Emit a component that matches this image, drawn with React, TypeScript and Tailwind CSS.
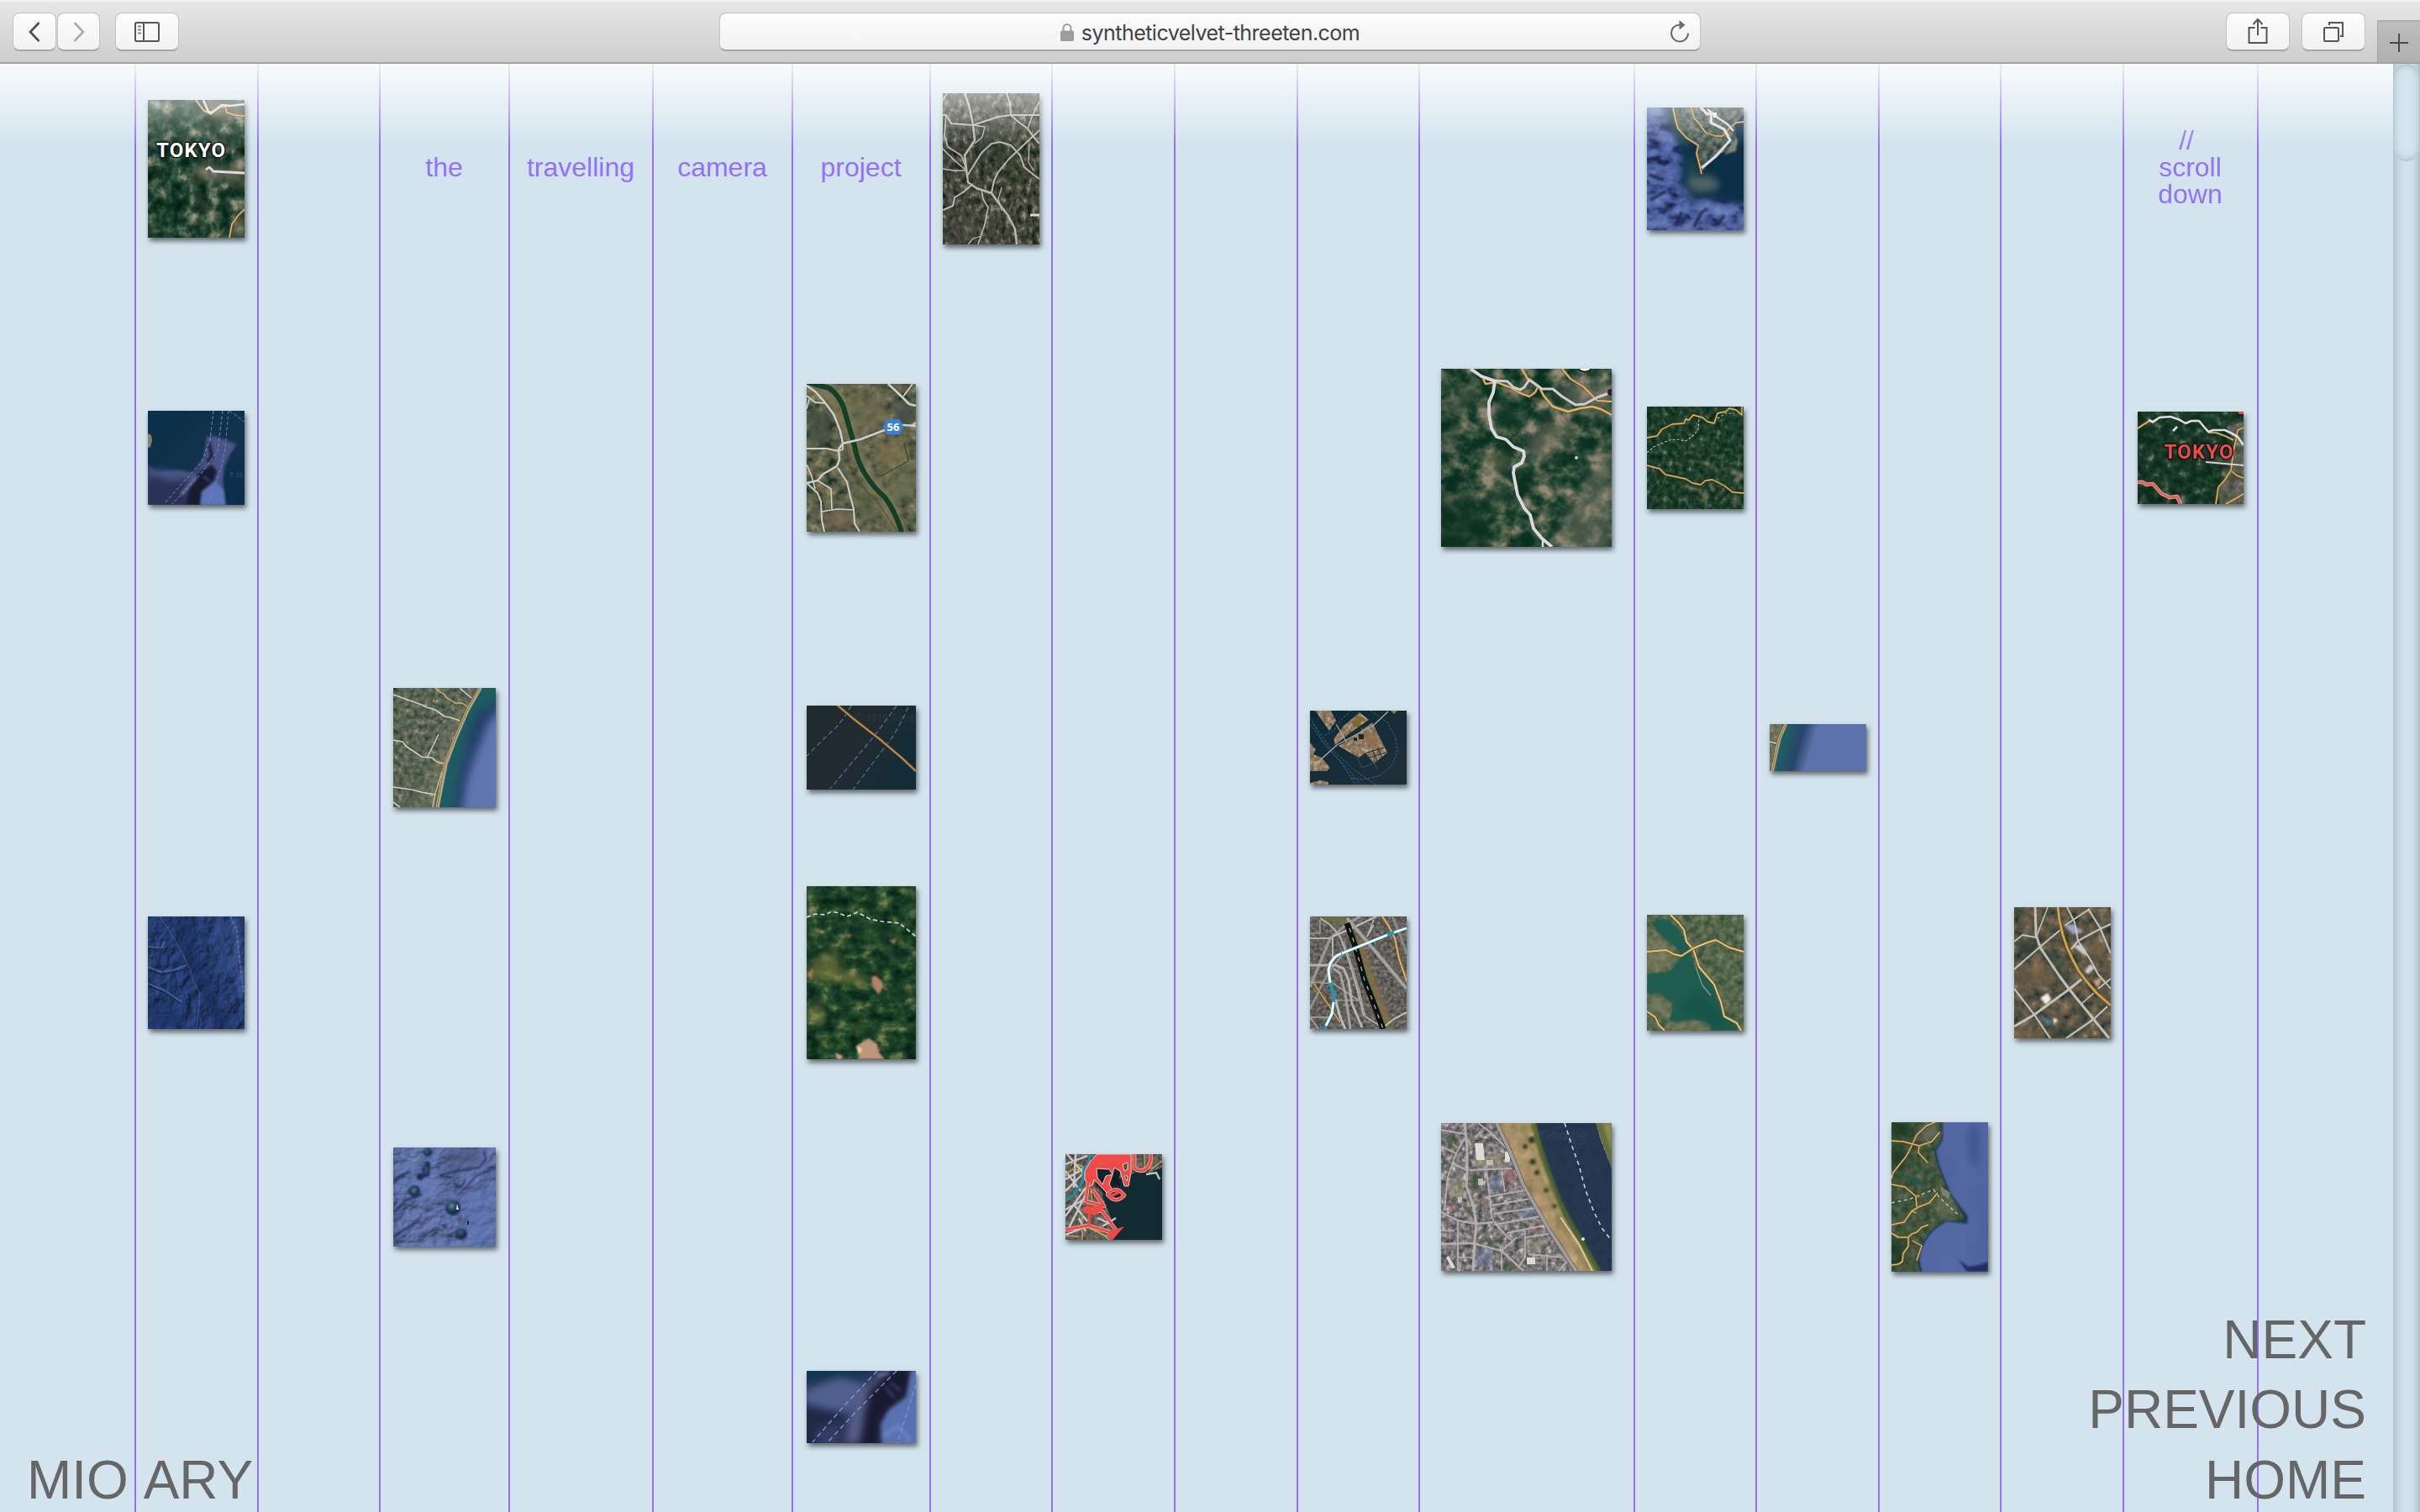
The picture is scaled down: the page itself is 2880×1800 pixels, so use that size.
import React from "react";

/* ---------- terrain drawing helpers ---------- */

function channel(colors: string[], offset: number) {
  return colors.map((c) => (parseInt(c.slice(offset, offset + 2), 16) / 255).toFixed(3)).join(" ");
}

type TexProps = { id: string; freq: string; seed?: number; oct?: number; gain?: number; colors: string[] };

/** Fractal noise mapped onto a colour ramp. */
function Tex({ id, freq, seed = 1, oct = 5, gain = 1.6, colors }: TexProps) {
  const off = 0.5 - gain / 2;
  const row = `${gain} 0 0 0 ${off}`;
  return (
    <filter id={id} x="0" y="0" width="100%" height="100%" colorInterpolationFilters="sRGB">
      <feTurbulence type="fractalNoise" baseFrequency={freq} numOctaves={oct} seed={seed} />
      <feColorMatrix type="matrix" values={`${row} ${row} ${row} 0 0 0 0 1`} />
      <feComponentTransfer>
        <feFuncR type="table" tableValues={channel(colors, 1)} />
        <feFuncG type="table" tableValues={channel(colors, 3)} />
        <feFuncB type="table" tableValues={channel(colors, 5)} />
      </feComponentTransfer>
      <feComposite in2="SourceAlpha" operator="in" />
    </filter>
  );
}

function Blur({ id, s }: { id: string; s: number }) {
  return (
    <filter id={id} x="-50%" y="-50%" width="200%" height="200%" colorInterpolationFilters="sRGB">
      <feGaussianBlur stdDeviation={s} />
    </filter>
  );
}

type RoadProps = { p: string; c?: string; w?: number; casing?: string; dash?: string; o?: number };

function Road({ p, c = "#cfcfca", w = 1.6, casing, dash, o = 1 }: RoadProps) {
  return (
    <g fill="none" strokeLinejoin="round" opacity={o}>
      {casing && <polyline points={p} stroke={casing} strokeWidth={w + 1.4} opacity=".8" />}
      <polyline points={p} stroke={c} strokeWidth={w} strokeDasharray={dash} />
    </g>
  );
}

const AMBER = "#e0b368";
const AMBER_EDGE = "#6d5427";

const FOREST = ["#04200f", "#0b2a1a", "#133425", "#1f4030", "#3a5640", "#6a7460", "#9a9480"];

function Tile({ w, h, children }: { w: number; h: number; children: React.ReactNode }) {
  return (
    <div className="shrink-0 shadow-[2px_4px_6px_rgba(0,0,0,0.55)]" style={{ width: w, height: h }}>
      <svg width={w} height={h} viewBox={`0 0 ${w} ${h}`} className="block overflow-hidden">
        {children}
      </svg>
    </div>
  );
}

function CityLabel({ x, y, fill }: { x: number; y: number; fill: string }) {
  return (
    <text
      x={x}
      y={y}
      fill={fill}
      stroke="#0b1410"
      strokeWidth="3"
      paintOrder="stroke"
      strokeLinejoin="round"
      textLength="82"
      fontFamily="Roboto, sans-serif"
      fontWeight="700"
      fontSize="24"
    >
      TOKYO
    </text>
  );
}

/* ---------- row one ---------- */

const TokyoForest = () => (
  <Tile w={115} h={164}>
    <Tex id="a1" freq="0.07 0.06" seed={8} gain={1.7} colors={FOREST} />
    <Blur id="a1b" s={4} />
    <rect width="115" height="164" filter="url(#a1)" />
    <g fill="#8c806b" opacity=".6" filter="url(#a1b)">
      <path d="M50 84L70 74 90 82 115 72V104L90 94 80 98 62 96Z" />
      <path d="M104 140L115 128V164H98Z" />
      <path d="M58 0H115V18L78 22Z" />
      <path d="M52 108L66 120 88 140 80 142 60 124Z" opacity=".7" />
      <path d="M84 46L96 40 92 60Z" opacity=".7" />
    </g>
    <Road p="57,0 66,12 75,17 84,9 92,8 94,15 104,18 115,19" c={AMBER} casing={AMBER_EDGE} />
    <Road p="66,0 72,14 76,15 88,6 98,7 115,5" c="#dedddb" w={2.6} />
    <Road p="69,83 73,80 78,85 115,87" c="#dddce2" w={2.8} />
    <Road p="115,130 107,138 100,148 97,164" c={AMBER} casing={AMBER_EDGE} w={1.6} />
    <CityLabel x={10} y={68} fill="#ffffff" />
  </Tile>
);

const RoadWeb = () => (
  <Tile w={115} h={180}>
    <Tex id="a2" freq="0.16 0.12" seed={3} gain={1.8} colors={["#161d18", "#2b3529", "#3b4033", "#4a4a3f", "#615d50", "#8f8876"]} />
    <Blur id="a2b" s={9} />
    <rect width="115" height="180" filter="url(#a2)" />
    <g filter="url(#a2b)" opacity=".45">
      <ellipse cx="55" cy="62" rx="18" ry="26" fill="#1d3324" />
      <ellipse cx="30" cy="160" rx="26" ry="18" fill="#4d4d42" />
      <ellipse cx="88" cy="86" rx="16" ry="26" fill="#33401f" />
    </g>
    <g opacity=".92">
      <Road p="26,0 31,14 36,37 38,56 26,74 30,106 40,113 58,119 66,130 78,146 86,162 88,180" w={2.4} c="#c4c4c0" />
      <Road p="0,26 4,26 10,36 36,38 54,32 66,28 81,26 115,26" w={2} c="#c4c4c0" />
      <Road p="76,0 80,12 81,26 90,34 101,42 108,52 115,60" w={2} c="#c4c4c0" />
      <Road p="4,26 2,50 6,64 22,74 28,90" c="#c4c4c0" />
      <Road p="0,66 14,80 28,92 14,92 0,90" c="#c4c4c0" />
      <Road p="30,97 38,84 46,71 58,60 68,58 81,62 92,74 97,88 108,97 115,102" w={2} c="#c4c4c0" />
      <Road p="115,44 100,58 78,79 66,94 61,104 58,119" w={2} c="#c4c4c0" />
      <Road p="36,108 24,118 14,124 12,134 0,139" w={2} c="#c4c4c0" />
      <Road p="46,114 48,126 54,136 50,156 42,180" c="#c4c4c0" />
      <Road p="101,42 106,28 115,10" c="#c4c4c0" />
      <Road p="103,60 102,82 108,92" c="#c4c4c0" w={1.3} />
      <Road p="36,38 50,40 47,52 38,60" c="#c4c4c0" w={1.3} />
      <Road p="70,112 66,126 70,140" c="#c4c4c0" w={1.2} />
      <Road p="104,145 115,145" c="#e6e3dd" w={3} />
      <Road p="0,8 5,0" c="#c4c4c0" />
      <Road p="30,180 36,173 46,170" c="#c4c4c0" w={1.2} />
    </g>
  </Tile>
);

const Peninsula = () => (
  <Tile w={115} h={146}>
    <Tex id="a3" freq="0.05 0.07" seed={5} gain={1.7} oct={3} colors={["#1a2342", "#2c3a6c", "#465793", "#566aa9", "#6074b2", "#7182bd"]} />
    <Tex id="a3l" freq="0.14 0.14" seed={7} colors={["#1f3a35", "#3d544a", "#5a6659", "#7a7a6c", "#94907f"]} />
    <Blur id="a3b" s={4} />
    <Blur id="a3c" s={1} />
    <rect width="115" height="146" filter="url(#a3)" />
    <path d="M22 -6L26 22 40 46 40 90 54 110 76 108 122 116V-6Z" fill="#0d3049" filter="url(#a3b)" />
    <path d="M66 -6L60 100 76 104 122 112V-6Z" fill="#0b2f47" filter="url(#a3b)" />
    <g fill="none" stroke="#171d3a" opacity=".7" filter="url(#a3c)">
      <path d="M2 38L14 44M0 62L12 60 18 66M2 80L20 86M4 110L22 100M34 140L42 124M56 142L64 126 72 120M84 140L92 128" strokeWidth="4" />
    </g>
    <path d="M18 0L30 0 50 40 50 60 46 84 56 92 62 74 30 20Z" fill="#2c5354" opacity=".7" filter="url(#a3b)" />
    <path d="M30 0H115V8L104 20 108 44 96 50 78 62 65 77 59 54 60 46 36 24Z" filter="url(#a3l)" opacity=".85" />
    <path d="M50 84L72 80 86 88 84 98 60 102 48 94Z" fill="#66746c" opacity=".75" filter="url(#a3b)" />
    <path d="M100 44L108 36 106 52 92 56Z" fill="#7c8576" filter="url(#a3c)" />
    <Road p="31,0 34,15 37,25 47,36 61,45 59,55 62,66 65,79" c={AMBER} casing={AMBER_EDGE} />
    <Road p="53,0 56,12 62,19 70,30 82,34 90,34 98,25 106,18 115,17" c={AMBER} casing={AMBER_EDGE} w={1.3} />
    <Road p="64,0 72,8 77,6 76,18 92,26 99,39 82,58 65,72" c="#dcdce2" w={3.2} />
    <Road p="72,2 84,12 96,20 103,28" c="#dcdce2" w={2.4} />
    <path d="M79 6h4v6h-4z" fill="#fff" />
  </Tile>
);

/* ---------- row two ---------- */

const Strait = () => (
  <Tile w={115} h={112}>
    <Blur id="b1b" s={1.8} />
    <Blur id="b1c" s={4} />
    <linearGradient id="b1g" x1="0" y1="0" x2="1" y2="1">
      <stop offset="0" stopColor="#0a2f49" />
      <stop offset=".6" stopColor="#10344a" />
      <stop offset="1" stopColor="#092c4c" />
    </linearGradient>
    <rect width="115" height="112" fill="url(#b1g)" />
    <path d="M70 31L79 30 106 40 98 51 91 66 89 84 93 116H-5V62L11 73 37 71 54 74 67 54Z" fill="#4b5688" filter="url(#b1b)" />
    <g filter="url(#b1c)">
      <path d="M-4 60L8 74 24 84 46 80 56 92 66 104 60 118H-4Z" fill="#252b4c" opacity=".85" />
      <path d="M0 76Q20 72 40 80" stroke="#475588" strokeWidth="8" fill="none" />
      <path d="M52 74L66 62" stroke="#2c335b" strokeWidth="6" />
    </g>
    <g filter="url(#b1b)">
      <path d="M58 76L76 64 82 72 78 84 64 96 62 114 46 112 50 90Z" fill="#171b30" />
      <path d="M73 38L76 56 70 60" stroke="#1b1f36" strokeWidth="4" fill="none" />
      <path d="M64 96L80 84 90 94 92 112H62Z" fill="#5c76b9" />
      <path d="M40 100L58 78" stroke="#59648f" strokeWidth="5" />
      <path d="M66 78L74 84" stroke="#474d75" strokeWidth="2" />
    </g>
    <path d="M0 27l4 2 1 6-2 8-3 1Z" fill="#7d8467" />
    <text x="97" y="79" fontSize="7" fill="#39577a" textLength="16" fontFamily="Roboto, sans-serif">© 20</text>
    <Road p="78,0 74,34 64,61 19,111" c="#7e96c8" w={0.9} dash="4 2.5" />
    <Road p="89,0 83,48 64,74 29,111" c="#7e96c8" w={0.9} dash="4 2.5" />
    <Road p="96,0 92,44 87,68 72,111" c="#6d88c2" w={0.9} dash="4 2.5" />
    <Road p="97,0 115,13" c="#7e96c8" w={0.9} dash="4 2.5" />
  </Tile>
);

const RiverBend = () => (
  <Tile w={130} h={176}>
    <Tex id="b2" freq="0.09 0.09" seed={11} colors={["#1c2c20", "#39483a", "#525a45", "#64654c", "#737055", "#948a6a"]} />
    <Blur id="b2b" s={2} />
    <Blur id="b2c" s={5} />
    <rect width="130" height="176" filter="url(#b2)" />
    <g filter="url(#b2c)" opacity=".7">
      <path d="M60 10H90L104 50 60 60 50 24Z" fill="#706d50" />
      <path d="M80 70L115 60 122 90 90 108Z" fill="#80754f" />
      <path d="M90 110L130 90V140H104Z" fill="#6b7052" />
      <path d="M56 110L100 160 60 160Z" fill="#5f654a" />
      <path d="M106 16L130 30V50L108 44Z" fill="#3c4648" />
      <path d="M0 34H30V70H0Z" fill="#3c4a3d" />
      <path d="M20 150H55V176H22Z" fill="#746650" />
    </g>
    <path d="M0 0L27 7 42 24 50 51 57 74 70 108 93 135 113 180" stroke="#7f7959" strokeWidth="18" fill="none" opacity=".7" filter="url(#b2b)" />
    <path d="M22 8L38 40 42 62" stroke="#a28a60" strokeWidth="5" strokeDasharray="3 2" fill="none" opacity=".6" filter="url(#b2b)" />
    <path d="M0 -2L27 5Q38 13 44 28L57 74Q60 92 70 108T93 135Q106 152 114 180" stroke="#143f27" strokeWidth="6" fill="none" />
    <path d="M46 66L50 96 66 122 84 140 100 164 108 176" stroke="#5b4630" strokeWidth="1.500" fill="none" opacity=".7" />
    <path d="M88 110L121 92 116 70" stroke="#3e4630" strokeWidth="1.400" fill="none" />
    <Road p="0,2 10,9 20,20 32,36 40,56 43,71 38,78 39,90 36,98 20,107 13,115 0,118" w={2.4} />
    <Road p="43,71 64,66 90,56 115,49 130,50" w={2.6} />
    <Road p="43,71 43,78 38,80 24,77 0,77" w={1.8} />
    <Road p="37,100 48,117 52,134 56,149 57,166 63,176" w={2} />
    <Road p="0,96 6,110 10,125" w={1.6} />
    <Road p="0,118 13,130 17,140 18,162 21,176" w={2} />
    <Road p="13,115 29,125 30,149" w={1.6} />
    <Road p="18,152 36,149 56,150" w={1.6} />
    <Road p="97,0 113,15 122,24 130,26" w={2.8} />
    <Road p="126,0 115,15" w={1.8} />
    <Road p="0,14 10,22 22,23" w={1.8} />
    <Road p="3,18 0,30" w={1.4} />
    <Road p="124,50 130,46" w={2} />
    <path d="M96 42.500H110L115 51 110 60H96L91 51Z" fill="#3a80d2" stroke="#3a80d2" strokeLinejoin="round" />
    <text x="103" y="55.500" textAnchor="middle" fontSize="13" fontWeight="700" fill="#fff" fontFamily="Open Sans, sans-serif">56</text>
  </Tile>
);

const MountainRoad = () => (
  <Tile w={203} h={212}>
    <Tex id="b3" freq="0.045 0.05" seed={21} gain={1.9} colors={["#08301f", "#0d3122", "#173b2a", "#2c4c38", "#4d6049", "#75755f", "#938c7a"]} />
    <Blur id="b3b" s={7} />
    <rect width="203" height="212" filter="url(#b3)" />
    <g filter="url(#b3b)">
      <path d="M-10 150H40L60 180 60 222H-10Z" fill="#0b3020" opacity=".7" />
      <path d="M-10 50H20V100H-10Z" fill="#0b3020" opacity=".5" />
      <path d="M150 170L180 120 203 90V222H130Z" fill="#7f7c6c" opacity=".5" />
      <path d="M100 90L130 60 160 70 116 114Z" fill="#85796a" opacity=".6" />
      <path d="M130 24L203 14V60L150 40Z" fill="#7e7a70" opacity=".6" />
      <path d="M64 30L96 40 96 76 66 74Z" fill="#0c3324" opacity=".7" />
      <path d="M50 100L84 104 78 124 50 114Z" fill="#7e7860" opacity=".6" />
      <path d="M60 130L72 140 72 170 62 164Z" fill="#7e7860" opacity=".5" />
      <path d="M10 60L20 30 50 10 40 34Z" fill="#75745d" opacity=".5" />
    </g>
    <Road p="50,12 53,18 66,16 82,22 92,28 105,33 112,28 115,22" c={AMBER} casing={AMBER_EDGE} w={2} />
    <Road p="96,0 103,12 117,22 122,32 133,45 151,51 166,47 180,45 190,48 203,55" c={AMBER} casing={AMBER_EDGE} w={2.4} />
    <Road p="144,0 154,12 169,21 178,30 186,38 203,39" c={AMBER} casing={AMBER_EDGE} w={2} />
    <Road p="48,9 64,14 79,15 86,22 94,25 99,22 105,13 120,24 133,24 144,33 160,43 171,42 186,34 203,28" c="#cfcdd4" w={3} />
    <Road p="35,0 48,9 64,15 62,28 57,40 57,54 60,71 66,81 77,84 86,93 98,98 99,104 96,112 87,117 86,124 91,150 99,166 106,174 110,190 120,202 132,212" c="#dad8dd" w={3.8} />
    <Road p="121,203 121,212" c="#dedce0" w={2.5} />
    <ellipse cx="171" cy="0" rx="7" ry="3.500" fill="#fff" stroke="#222" strokeWidth="2" />
    <circle cx="202" cy="28" r="4" fill="#26242a" />
    <circle cx="161" cy="106" r="2" fill="#c6cdc3" />
  </Tile>
);

const HillRoads = () => (
  <Tile w={115} h={122}>
    <Tex id="b4" freq="0.16 0.14" seed={31} gain={1.3} colors={["#071f14", "#0f2d1d", "#173826", "#24432f", "#42593f", "#7b7d64"]} />
    <Blur id="b4b" s={1.6} />
    <rect width="115" height="122" filter="url(#b4)" />
    <g filter="url(#b4b)" fill="none" stroke="#938a72" opacity=".6">
      <path d="M100 76L113 82 104 90" strokeWidth="6" />
      <path d="M46 94L62 100 70 110M74 92L80 100M106 104L104 118M70 98V118" strokeWidth="3" />
      <path d="M50 64L70 68 86 76 100 74" strokeWidth="1.600" />
      <path d="M56 40L64 60M44 44L46 60M78 40L78 56 90 62" strokeWidth="1.200" opacity=".6" />
    </g>
    <Road p="0,37 12,35 18,27 30,21 44,20 46,15 50,16 55,10 66,13 72,18 80,20 84,8 94,6 98,2 106,4 113,10 113,0" c={AMBER} casing={AMBER_EDGE} w={1.3} />
    <Road p="0,55 8,48 26,40 36,39 46,41 56,34 61,27 62,13" c="#b7c0b0" w={1.1} dash="3 2" />
    <Road p="84,14 94,8 104,8" c="#7fb7a0" w={1.2} dash="3 2" />
    <Road p="0,70 15,74 22,81 46,86 54,91 64,93 70,88 78,87 92,94 102,102 115,103" c={AMBER} casing={AMBER_EDGE} w={1.3} />
  </Tile>
);

const TokyoRed = () => (
  <Tile w={126} h={110}>
    <Tex id="b5" freq="0.1 0.1" seed={41} gain={1.3} colors={["#06200f", "#0d2a1b", "#133223", "#1d3d2c", "#3a523b", "#7c806a"]} />
    <Tex id="b5u" freq="0.12 0.12" seed={4} gain={1.3} colors={["#3f4438", "#59594b", "#6c695b", "#7e796c", "#a8a196"]} />
    <Blur id="b5b" s={3} />
    <rect width="126" height="110" filter="url(#b5)" />
    <g opacity=".8">
      <path d="M104 16L126 10V110H98L108 84 100 78 112 62 82 60 96 54 112 56 116 30Z" fill="#6f6c5f" opacity=".7" filter="url(#b5b)" />
      <path d="M106 18L126 12V76L112 70 116 36ZM110 76L126 84V110H98L96 92Z" filter="url(#b5u)" />
    </g>
    <Road p="0,20 9,14 14,11 18,13 24,9" c={AMBER} casing={AMBER_EDGE} />
    <Road p="84,25 93,25 104,29 114,34" c={AMBER} casing={AMBER_EDGE} />
    <Road p="126,19 119,22 117,34 114,46 111,70 104,81 96,90 93,110" c={AMBER} casing={AMBER_EDGE} w={1.5} />
    <Road p="112,71 118,76 126,79" c={AMBER} casing={AMBER_EDGE} />
    <Road p="126,98 114,105 105,110" c={AMBER} casing={AMBER_EDGE} />
    <Road p="13,10 18,12 26,7 39,6 48,9 52,11 57,14 64,11 73,11 78,17 84,24 90,22 104,22 112,26 119,30 126,40" c="#dddbe3" w={2.6} />
    <Road p="81,60 126,64" c="#d5d3da" w={2.2} />
    <Road p="42,23 47,18" c="#dddbe3" w={2.6} />
    <Road p="0,84 6,84 10,87 18,86 29,98 38,102 47,101 51,110" c="#f25a55" casing="#e5d9d6" w={3} />
    <path d="M119 0H126V3H121Z" fill="#ee4a45" />
    <CityLabel x={31.5} y={56} fill="#ef4a45" />
  </Tile>
);

/* ---------- row three ---------- */

const CoastCurve = () => (
  <Tile w={122} h={142}>
    <Tex id="c1" freq="0.16 0.16" seed={51} gain={1.3} colors={["#22392e", "#3a4f43", "#515e4d", "#636a56", "#78796a", "#bdb8a2"]} />
    <Blur id="c1b" s={5} />
    <rect width="122" height="142" filter="url(#c1)" />
    <path d="M103 0Q85 28 72 61T52 142L30 142 50 80 80 20Z" fill="#8c8873" opacity=".35" filter="url(#c1b)" />
    <path d="M106 0Q86 32 75 62T54 142H122V0Z" fill="#1d5c60" />
    <path d="M135 6L104 28 92 54 78 96 71 150H135Z" fill="#294670" filter="url(#c1b)" />
    <path d="M135 18L114 40 100 76 88 110 82 150H135Z" fill="#5f76b0" filter="url(#c1b)" />
    <path d="M90 66L102 36 110 28" stroke="#1f3a5c" strokeWidth="7" fill="none" opacity=".7" filter="url(#c1b)" />
    <Road p="104,0 89,26 74,61 63,90 53,142" c="#a9a595" w={3.6} />
    <Road p="102,0 88,24 73,59 61,88 51,142" c={AMBER} casing={AMBER_EDGE} w={1} />
    <Road p="58,100 50,126 47,142" c="#c3bfae" w={1.4} />
    <Road p="0,8 34,20 40,23 50,26 61,34 68,35 79,39" />
    <Road p="50,0 54,4 60,7 64,12 74,18 82,18 89,23" c={AMBER} w={1.3} />
    <Road p="79,0 93,12" />
    <Road p="0,62 11,64 16,70 34,82 46,83 52,88 60,90" />
    <Road p="54,55 41,82" w={1.4} />
    <Road p="0,118 22,121 33,124 50,127" />
    <Road p="0,136 8,142" />
  </Tile>
);

const BridgeLine = () => (
  <Tile w={130} h={100}>
    <linearGradient id="c2g" x1="0" y1="0" x2="1" y2=".5">
      <stop offset="0" stopColor="#1f2a2f" />
      <stop offset=".6" stopColor="#212b31" />
      <stop offset="1" stopColor="#122c38" />
    </linearGradient>
    <rect width="130" height="100" fill="url(#c2g)" />
    <text x="58" y="18" fontSize="10" textLength="70" fill="#2f3a3f" fontFamily="Open Sans, sans-serif">© 2019 Goog</text>
    <Road p="53,0 46,12 37,24 18,42 0,60" c="#5878ae" w={1.1} dash="6 3.5" />
    <Road p="107,0 94,18 83,33 28,99" c="#5878ae" w={1.1} dash="6 3.5" />
    <Road p="121,2 112,20 103,36 55,100" c="#5878ae" w={1.1} dash="6 3.5" />
    <Road p="36,-1 56,16 87,40 114,63 130,78" c="#c08c4a" casing="#6e5430" w={1.8} />
  </Tile>
);

const HarbourIsland = () => (
  <Tile w={115} h={88}>
    <Tex id="c3" freq="0.2 0.2" seed={61} oct={3} colors={["#5b5640", "#7d6c50", "#927c62", "#a58c76", "#bfb0a2"]} />
    <linearGradient id="c3g" x1="0" y1="0" x2="1" y2="1">
      <stop offset="0" stopColor="#0d2a36" />
      <stop offset="1" stopColor="#202f3a" />
    </linearGradient>
    <rect width="115" height="88" fill="url(#c3g)" />
    <g filter="url(#c3)">
      <path d="M59 2L70 11 47 27 30 41 28 34 40 18ZM74 14L80 26 92 50 76 63 66 50 58 56 34 42 50 32Z" />
      <path d="M6 0H25L31 12 23 24ZM0 38L7 46 4 52 14 56 24 68 20 72H0ZM0 86L12 83 22 85V88H0Z" />
    </g>
    <path d="M50 14L60 6 66 10 52 20Z" fill="#7c6a2a" />
    <path d="M60 20L80 30 84 40 70 46Z" fill="#8b6a48" opacity=".6" />
    <path d="M58 28h6v6h-6zM52 32h4v4h-4z" fill="#182826" />
    <path d="M96 0L104 0 100 4Z" fill="#8b7a38" />
    <path d="M68 50L88 44M70 56L90 50M74 46L80 60M80 44L86 56" stroke="#26302c" fill="none" />
    <path d="M56 56L62 68 76 62M76 60L80 70" stroke="#2d5a58" fill="none" />
    <Road p="93,1 76,17 32,41 4,66" c="#a9aca0" w={1.4} />
    <Road p="31,16 44,38" c="#a9aca0" w={1.2} />
    <g opacity=".8">
      <Road p="72,0 92,14 102,32 104,50 97,66 82,78 61,82 48,80" c="#4a76a8" w={0.9} dash="3 1.6" />
      <Road p="0,8 14,34 40,66 54,88" c="#4a76a8" w={0.9} dash="3 1.6" />
      <Road p="0,16 20,44 44,68 60,88" c="#4a76a8" w={0.9} dash="3 1.6" />
      <Road p="4,16 26,46 52,70 78,88" c="#4a76a8" w={0.9} dash="3 1.6" />
      <Road p="49,0 36,12 28,24 16,30" c="#4a76a8" w={0.9} dash="3 1.6" />
    </g>
  </Tile>
);

const ShoreStrip = () => (
  <Tile w={115} h={56}>
    <Tex id="c4" freq="0.15 0.15" seed={71} colors={["#4c5a48", "#666d59", "#78796a", "#938e7a"]} />
    <linearGradient id="c4g" x1="0" y1="0" x2="1" y2="0" gradientTransform="rotate(8)">
      <stop offset="0" stopColor="#1f6260" />
      <stop offset=".2" stopColor="#1f5d62" />
      <stop offset=".36" stopColor="#26456c" />
      <stop offset=".5" stopColor="#5b72ab" />
      <stop offset="1" stopColor="#5c73ac" />
    </linearGradient>
    <rect width="115" height="56" fill="url(#c4g)" />
    <path d="M0 0H20Q10 22 4 56H0Z" filter="url(#c4)" />
    <Road p="20,0 13,16 9,32 4,56" c="#a9a38e" w={2.4} />
    <Road p="18,0 11,16 7,32 2,56" c={AMBER} casing={AMBER_EDGE} w={1.1} />
    <Road p="0,21 8,23" w={1.3} />
  </Tile>
);

/* ---------- row four ---------- */

const DeepSea = () => (
  <Tile w={115} h={134}>
    <filter id="d1" x="0" y="0" width="100%" height="100%" colorInterpolationFilters="sRGB">
      <feTurbulence type="fractalNoise" baseFrequency="0.08 0.07" numOctaves={5} seed={9} />
      <feColorMatrix type="matrix" values="0 0 0 0 0 0 0 0 0 0 0 0 0 0 0 1 0 0 0 0" />
      <feDiffuseLighting surfaceScale={2.6} lightingColor="#304d8e" diffuseConstant={1}>
        <feDistantLight azimuth={215} elevation={50} />
      </feDiffuseLighting>
    </filter>
    <Blur id="d1b" s={4} />
    <rect width="115" height="134" filter="url(#d1)" />
    <g filter="url(#d1b)" fill="none" opacity=".55">
      <path d="M44 0L50 50 66 80 90 134" stroke="#1a2a58" strokeWidth="18" />
      <path d="M104 0L106 40 112 96" stroke="#546fae" strokeWidth="8" />
      <path d="M84 0L86 34 96 70" stroke="#3f5da0" strokeWidth="10" />
      <path d="M0 100L40 112 50 134H0Z" fill="#1e3468" />
    </g>
    <g fill="none" strokeLinejoin="round">
      <path d="M14 0L26 18 40 42 50 62 54 78 62 92 58 134" stroke="#4c639c" strokeWidth="1.200" opacity=".6" />
      <path d="M0 60L16 66 30 64 46 58M0 36L16 38 20 30M0 80L20 88 40 102" stroke="#5f73a8" strokeWidth="2" opacity=".6" />
      <path d="M0 64L16 69 32 66 50 62M0 82L20 91 40 104M0 38L18 39" stroke="#14204a" strokeWidth="1.400" opacity=".8" />
      <path d="M0 112Q18 120 36 110" stroke="#1b2d62" />
      <path d="M98 0L106 16 108 44 114 90" stroke="#7085b8" strokeWidth="1.400" opacity=".7" strokeDasharray="4 2" />
    </g>
  </Tile>
);

const Woodland = () => (
  <Tile w={130} h={206}>
    <Tex id="d2" freq="0.06 0.08" seed={81} gain={1.5} colors={["#062013", "#0d2b1b", "#143722", "#1d4227", "#2e5130", "#52673f", "#808055"]} />
    <Blur id="d2b" s={4} />
    <Blur id="d2c" s={0.8} />
    <rect width="130" height="206" filter="url(#d2)" />
    <g filter="url(#d2b)" opacity=".6">
      <path d="M14 84L36 74 40 96 70 108 74 118 30 116 0 108V98Z" fill="#7e7a43" />
      <path d="M4 146L16 136 22 160 14 168 0 158Z" fill="#7e8143" />
      <path d="M28 44L104 46 120 70 60 60Z" fill="#10301f" />
      <path d="M70 38L76 58 100 82" stroke="#64814a" strokeWidth="3" fill="none" />
      <path d="M56 168L70 162 60 176Z" fill="#7d8046" />
    </g>
    <g filter="url(#d2c)">
      <path d="M77 108L86 106 91 118 86 129 79 120Z" fill="#b08568" />
      <path d="M80 104L90 108 88 112Z" fill="#3a1f17" />
      <path d="M59 190L74 181 84 188 86 198 93 206H60L64 200Z" fill="#bf957e" />
      <path d="M59 190L66 194 62 202Z" fill="#ebdda8" />
      <path d="M34 198L43 202 41 206H36Z" fill="#d49c84" />
      <path d="M46 56L54 58 50 62ZM98 64L108 62 104 70Z" fill="#87704c" />
      <path d="M0 104L8 98 6 112Z" fill="#a5754f" />
    </g>
    <Road p="0,37 10,33 22,34 30,30 38,32 48,36 54,34 60,31 68,35 75,39 90,42 110,44 118,50 130,60" c="#d4d9ca" w={1.7} dash="5 3.5" />
  </Tile>
);

const RailMap = () => (
  <Tile w={115} h={134}>
    <Tex id="d3" freq="0.25 0.25" seed={91} oct={3} gain={1.3} colors={["#2f2e2b", "#4f4d48", "#63605c", "#777470", "#a39f9b"]} />
    <Blur id="d3b" s={2} />
    <rect width="115" height="134" filter="url(#d3)" />
    <path d="M10 0L44 4 56 40 76 98 96 136" stroke="#6f7043" strokeWidth="11" fill="none" opacity=".75" filter="url(#d3b)" />
    <path d="M58 24L72 70 92 124" stroke="#87704a" strokeWidth="8" fill="none" opacity=".7" filter="url(#d3b)" />
    <g opacity=".92">
      <Road p="0,84 24,26 44,9 60,0" c="#9b9a9c" w={3.6} />
      <Road p="0,110 22,66 40,44" c="#9b9a9c" w={2.4} />
      <Road p="79,0 54,12 27,24" c="#c9c8c9" w={2} />
      <Road p="44,2 68,30 90,56 115,86" c="#a9a8aa" w={4} />
      <Road p="0,26 27,26 27,50" c="#bcbbbc" w={2} />
      <Road p="0,58 30,58 40,62 46,76 50,104 62,132" c="#bcbbbc" w={3} />
      <Road p="28,62 36,68 42,92 48,134" c="#a9a8aa" w={3} />
      <Road p="12,2 24,10 36,24 46,52 56,86 64,118 86,132" c="#bcb9b4" w={2} />
      <Road p="40,30 50,60 58,86 66,120" c="#a19e9b" w={2} />
      <Road p="30,98 36,120 42,134" c="#c4c3c5" w={3} />
      <Road p="76,4 68,24 76,10" c="#bcbbbc" w={1.6} />
      <Road p="98,0 108,24 115,44" c="#8c8b8e" w={3} />
      <Road p="0,120 26,120" c="#b7b5b3" w={1.4} />
      <Road p="0,20 12,20 12,4" c="#b7b5b3" w={1.2} />
      <Road p="0,78 28,80 58,100 26,100" c="#b7b5b3" w={1.2} />
      <Road p="86,133 100,122 115,114" c="#c7c4be" w={2} />
      <Road p="0,120 10,134" c="#b7b5b3" w={1.4} />
    </g>
    <Road p="4,79 36,126" c="#d3a655" casing={AMBER_EDGE} w={1.4} />
    <Road p="86,0 94,12 101,26 106,50 115,77" c={AMBER} casing={AMBER_EDGE} w={2} />
    <Road p="44,8 54,36 65,76 76,104 87,134" c="#0c1213" w={7} />
    <Road p="47,14 54,36 65,76 76,104 87,134" c="#b9bfbf" w={1.2} dash="5 7" />
    <Road p="115,14 92,22 38,44 30,48 24,56 22,64 24,79 29,96 26,116 17,134" c="#2298ae" w={4} />
    <Road p="115,14 100,19" c="#ffffff" w={2.6} />
    <Road p="92,22 38,44" c="#ffffff" w={2.8} />
    <Road p="37,44 30,48 24,56 22,64 24,79" c="#ffffff" w={3} />
    <Road p="28,102 26,116 19,130" c="#ffffff" w={2.8} />
  </Tile>
);

const Lake = () => (
  <Tile w={115} h={138}>
    <Tex id="d4" freq="0.13 0.13" seed={101} gain={1.3} colors={["#2c4a32", "#41583f", "#54674b", "#68735a", "#84866d"]} />
    <Blur id="d4b" s={1} />
    <Blur id="d4c" s={5} />
    <rect width="115" height="138" filter="url(#d4)" />
    <g filter="url(#d4c)" opacity=".55" fill="#8d8466">
      <path d="M0 24L16 26 34 40 26 66 0 68ZM0 96L14 96 30 110 20 124 0 112ZM30 128L60 124 74 138H26Z" />
    </g>
    <path
      d="M9 4L26 6 41 21 50 36 57 61 78 83 89 114 107 131 109 138H75L76 131 55 124 36 128 26 126 32 108 16 94 0 94V70L26 68 41 51 34 38 20 28 12 18Z"
      fill="#1f5c50"
      filter="url(#d4b)"
    />
    <path d="M60 90L90 120 100 138H80L70 124 34 118Z" fill="#124f48" opacity=".6" filter="url(#d4c)" />
    <Road p="58,62 66,84 76,96" c="#8d9a88" w={1.2} />
    <Road p="28,0 38,10 44,18 47,32 55,41 62,62 80,83 88,104 92,121 107,129 112,138" c="#e8c57c" casing={AMBER_EDGE} w={2} />
    <Road p="0,44 23,42 32,47 41,49 55,40 72,33 82,30 98,39 115,44" c="#e8c57c" casing={AMBER_EDGE} w={2} />
    <Road p="0,115 10,122 14,131 21,138" c="#e8c57c" casing={AMBER_EDGE} w={1.8} />
  </Tile>
);

const StreetGrid = () => (
  <Tile w={115} h={156}>
    <Tex id="d5" freq="0.09 0.09" seed={111} gain={1.3} colors={["#1c2723", "#37423a", "#525041", "#645a47", "#776952", "#9b907d"]} />
    <Blur id="d5b" s={3} />
    <Blur id="d5c" s={0.9} />
    <rect width="115" height="156" filter="url(#d5)" />
    <g filter="url(#d5b)" opacity=".55">
      <path d="M0 40L22 42 30 56 10 58ZM32 50L40 50 66 88 58 92ZM44 140L66 146 60 156H44ZM70 110L90 120 86 134Z" fill="#1a342c" />
      <path d="M10 70L34 62 50 88 20 92ZM70 112L60 130 50 120ZM84 42L104 40 110 66 96 62ZM0 140L20 146 30 156H0Z" fill="#86694b" />
    </g>
    <g filter="url(#d5c)">
      <path d="M31 108L40 102 44 110 38 116ZM46 132L52 134 48 139Z" fill="#f3efe8" />
      <path d="M60 22L70 20 82 30 70 32Z" fill="#9aa5c4" />
      <path d="M70 46L80 44 88 58 82 56ZM84 76L90 68 96 72 88 80Z" fill="#c6ced0" />
      <path d="M30 128L46 136 40 142Z" fill="#4c777b" />
      <path d="M94 88L104 84 100 96Z" fill="#cf9f82" />
    </g>
    <g opacity=".88">
      <Road p="25,0 26,33 31,48 54,82 65,97 113,156" w={3} />
      <Road p="0,41 10,33 26,36" w={2} />
      <Road p="40,0 27,34" w={1.6} />
      <Road p="0,74 31,47 55,27" w={2.2} />
      <Road p="60,22 90,2" w={2} />
      <Road p="0,142 24,128 65,98 80,86" w={3} />
      <Road p="62,156 95,133 111,118" w={2.2} />
      <Road p="0,97 24,128 43,156" w={2.2} />
      <Road p="63,0 72,18 76,40 91,63 100,80 115,97" w={2} />
      <Road p="88,2 102,24 115,55" w={2.2} />
      <Road p="68,50 76,40 98,28 115,20" w={2.2} />
      <Road p="80,115 95,102" w={1.6} />
      <Road p="100,97 115,85" w={2} />
    </g>
    <Road p="52,0 54,16 58,33 63,48 70,63 77,76 86,88 98,102 115,117" c="#d3a24c" casing="#5e4a20" w={2.8} />
  </Tile>
);

/* ---------- row five ---------- */

const Seamounts = () => (
  <Tile w={122} h={118}>
    <filter id="e1" x="0" y="0" width="100%" height="100%" colorInterpolationFilters="sRGB">
      <feTurbulence type="fractalNoise" baseFrequency="0.03 0.04" numOctaves={4} seed={14} />
      <feColorMatrix type="matrix" values="0 0 0 0 0 0 0 0 0 0 0 0 0 0 0 1 0 0 0 0" />
      <feDiffuseLighting surfaceScale={4.5} lightingColor="#6376ae" diffuseConstant={1.12}>
        <feDistantLight azimuth={225} elevation={55} />
      </feDiffuseLighting>
    </filter>
    <Blur id="e1b" s={0.9} />
    <Blur id="e1c" s={5} />
    <rect width="122" height="118" filter="url(#e1)" />
    <g filter="url(#e1c)" opacity=".5">
      <path d="M80 60L122 30V118H90Z" fill="#6079b8" />
      <path d="M60 0H110V24L60 30Z" fill="#505880" />
      <path d="M10 20L40 20 60 56 30 70Z" fill="#6a7db8" />
    </g>
    <g fill="none" stroke="#28305a" filter="url(#e1b)">
      <path d="M55 33L76 28 102 24 110 14 108 4M121 25L99 34 88 46 77 57M55 34L70 36" strokeWidth="1.800" />
      <path d="M0 40L20 28M0 78L16 62 34 56M0 106L26 90 34 80" strokeWidth="2.400" />
      <path d="M72 42L80 48 86 38M58 92L64 96M60 80L56 84" strokeWidth="1.600" />
    </g>
    <g fill="none" stroke="#8394c4" strokeWidth="2" opacity=".6" filter="url(#e1b)">
      <path d="M10 10L24 16 30 12M0 34L18 24M28 84L44 78M64 96L76 90 92 106" />
    </g>
    <g filter="url(#e1b)">
      <g fill="#1c2c50">
        <circle cx="41" cy="6" r="5" />
        <path d="M36 36L34 26 40 16 44 18 43 34Z" />
        <circle cx="32" cy="35" r="4" />
        <circle cx="25" cy="52" r="7" />
        <circle cx="71" cy="72" r="9" />
        <circle cx="81" cy="103" r="7" />
      </g>
      <g fill="#2c5668">
        <circle cx="40" cy="5" r="3" />
        <ellipse cx="39" cy="27" rx="2.500" ry="6" />
        <circle cx="24.500" cy="51" r="4.500" />
        <circle cx="69.500" cy="69.500" r="6" />
        <circle cx="79.500" cy="100" r="4.500" />
      </g>
      <circle cx="24.500" cy="51" r="1.800" fill="#5f8c7c" />
      <circle cx="69.500" cy="69.500" r="2.600" fill="#5c8577" />
    </g>
    <path d="M76 67L78 74H75Z" fill="#e8ecf2" />
    <path d="M88 87l2 1v4h-2z" fill="#182447" />
  </Tile>
);

const RedHarbour = () => (
  <Tile w={115} h={102}>
    <Tex id="e2" freq="0.2 0.2" seed={121} oct={3} colors={["#2f2e2a", "#57554f", "#6c6963", "#85827c"]} />
    <rect width="115" height="102" fill="#122a31" />
    <path d="M0 0H115V16L100 22 84 22 60 30 44 50 50 66 60 90 56 102H0Z" filter="url(#e2)" />
    <path d="M36 16L56 14 66 22 60 40 48 50 36 36Z" fill="#0f262c" />
    <g stroke="#d5d4da" fill="none" strokeWidth="2.400" opacity=".9">
      <path d="M0 12L26 2M0 30L26 14M2 0L24 26M0 44L22 22M12 0L10 40M0 74L24 40M4 88L24 48M0 66L22 54M10 60L26 80M0 20L18 44M16 76L24 92M38 76L56 84M44 86L60 76M96 24L108 22 112 30M0 96L20 88" />
    </g>
    <g stroke="#caa149" fill="none" strokeWidth="1.400">
      <path d="M0 26Q8 14 18 20M14 12L24 16M0 97L16 98M28 88L50 98M34 90Q44 94 52 102M20 70L20 102M94 0L94 16M115 8L102 18M30 40L32 60M6 14L10 8" />
    </g>
    <Road p="30,0 28,10 22,17 20,34 9,49 0,55" c="#1f8ea3" w={3} />
    <g fill="#ee4a47" stroke="#f3c9c6" strokeWidth="1" strokeLinejoin="round" fillRule="evenodd">
      <path d="M38 0H78V22L75 38 70 38 65 20 58 16 56 24 52 36 56 42 49 46 34 30 32 37 28 38 23 30 23 20 30 8ZM37 17L52 18 56 24 48 26 44 36 38 28ZM68 12L74 10 74 18 70 20ZM70 26L74 26 73 32Z" />
    </g>
    <g fill="none" strokeLinejoin="round">
      <g stroke="#f0bdb9" strokeWidth="4.600">
        <path d="M82 0V17L90 20Q102 18 102 0M50 48Q60 36 70 49Q60 60 50 48ZM27 34L24 56 46 62 32 42M22 66L44 68 60 90M0 90L27 85 54 93" />
      </g>
      <g stroke="#ee4a47" strokeWidth="3.200">
        <path d="M82 0V17L90 20Q102 18 102 0M50 48Q60 36 70 49Q60 60 50 48ZM54 50L66 44M27 34L24 56 46 62 32 42M26 60L28 72M22 66L44 68 60 90M0 90L27 85 54 93M28 68V84" />
      </g>
    </g>
    <path d="M52 92L70 86 56 102H52Z" fill="#ee4a47" />
    <path d="M20 63L44 61 44 66 34 73 22 69Z" fill="#ee4a47" />
    <path d="M60 24L56 36 60 34 64 36Z" fill="#0b1b20" stroke="#0b1b20" strokeWidth="2" />
  </Tile>
);

const RiverTown = () => (
  <Tile w={203} h={176}>
    <Tex id="e3" freq="0.16 0.16" seed={131} oct={3} gain={1.7} colors={["#3a4440", "#565a5a", "#6e6b70", "#85807f", "#9f9a98", "#cbc7c2"]} />
    <Tex id="e3s" freq="0.06 0.06" seed={13} colors={["#8b7a4e", "#a08a64", "#b0966e", "#c4ab82"]} />
    <Tex id="e3r" freq="0.1 0.1" seed={17} oct={2} gain={1} colors={["#1f2f48", "#26374f", "#2a3a50"]} />
    <Blur id="e3b" s={1.8} />
    <rect width="203" height="176" filter="url(#e3)" />
    <g filter="url(#e3b)" opacity=".55">
      <path d="M6 16L18 12 20 26 8 28ZM34 60L48 62 46 80 34 78ZM74 162L90 170 84 176H74Z" fill="#36532f" />
      <path d="M74 56L86 52 88 74 76 70ZM46 88L56 90 52 98ZM8 92L18 94 12 106ZM104 124L120 126 116 134Z" fill="#a8696c" />
      <path d="M58 64L72 60 74 78 58 84ZM90 100L116 96 118 110 92 114ZM40 152L60 150 62 170 42 172Z" fill="#6f7a9c" />
      <path d="M40 120L70 150 62 152ZM26 106L36 100 38 112Z" fill="#51683f" />
      <path d="M8 70L26 64 26 90 10 88ZM40 40L76 36 70 52 40 52ZM104 140L124 138 122 150 104 152Z" fill="#a09a7c" />
    </g>
    <g fill="#dddcd6">
      <path d="M40 24h10l2 20h-10zM76 34h6v12h-6zM102 160h10v8h-10zM6 160l3-2 8 14-4 1z" />
      <path d="M54 44h8v6h-8zM44 66h6v8h-6zM20 88h5v6h-5z" opacity=".7" />
    </g>
    <g opacity=".9">
      <Road p="28,0 31,30 31,60 30,74 38,98 42,120 40,140 38,176" c="#bab4b3" w={3} />
      <Road p="0,8 28,13" c="#bab4b3" w={2} />
      <Road p="0,28 18,36 28,18" c="#bab4b3" w={2} />
      <Road p="18,36 8,64 4,104" c="#bab4b3" w={2} />
      <Road p="14,48 30,56 84,54" c="#bab4b3" w={2} />
      <Road p="0,106 20,116 42,120 62,118" c="#bab4b3" w={2.4} />
      <Road p="0,144 38,143 72,152 98,176" c="#bab4b3" w={2.4} />
      <Road p="20,116 20,176" c="#bab4b3" w={1.8} />
      <Road p="54,88 100,80" c="#bab4b3" w={1.8} />
      <Road p="60,98 106,90" c="#bab4b3" w={1.8} />
      <Road p="62,108 112,101" c="#bab4b3" w={1.8} />
      <Road p="64,121 118,111" c="#bab4b3" w={1.8} />
      <Road p="78,131 122,122" c="#bab4b3" w={1.8} />
      <Road p="100,136 128,132" c="#bab4b3" w={1.8} />
      <Road p="54,58 58,88 60,112 68,124 84,140" c="#bab4b3" w={1.8} />
      <Road p="72,56 76,82" c="#bab4b3" w={1.6} />
      <Road p="100,128 100,160 92,172" c="#bab4b3" w={1.8} />
      <Road p="72,152 90,136" c="#bab4b3" w={1.8} />
      <Road p="104,156 144,160" c="#bab4b3" w={1.8} />
      <Road p="72,154 72,176" c="#bab4b3" w={1.6} />
      <Road p="44,0 60,12 78,30" c="#bab4b3" w={2} />
      <Road p="0,128 16,128" c="#bab4b3" w={1.6} />
      <Road p="126,156 126,176" c="#bab4b3" w={1.6} />
      <Road p="150,164 140,176" c="#bab4b3" w={2} />
      <Road p="22,160 38,160" c="#bab4b3" w={1.6} />
      <Road p="34,36 34,56" c="#57555a" w={1} />
    </g>
    <path d="M68 0H114L128 50 148 108 190 176H160L128 126 100 72Z" filter="url(#e3s)" />
    <path d="M96 0L112 44 126 84 146 124 176 176" stroke="#7d7d45" strokeWidth="5" fill="none" opacity=".4" filter="url(#e3b)" />
    <path d="M112 0H184L190 20 203 54V176H186L160 134 146 110 124 50Z" filter="url(#e3r)" />
    <path d="M110 0L116 24 126 54 140 92 152 116 188 178" stroke="#52662f" strokeWidth="6" fill="none" filter="url(#e3b)" />
    <path d="M184 0H203V54L194 28Z" fill="#626f3d" />
    <path d="M192 0H203V34Z" fill="#8f8a50" filter="url(#e3b)" />
    <g fill="#2d3b1e" filter="url(#e3b)">
      <circle cx="100" cy="28" r="3" />
      <circle cx="109" cy="46" r="3.500" />
      <circle cx="114" cy="59" r="3" />
      <circle cx="108" cy="20" r="4" />
      <circle cx="125" cy="80" r="2.500" />
      <circle cx="135" cy="99" r="2.500" />
    </g>
    <Road p="66,0 82,34 98,74 128,126 162,178" c="#a39c9c" casing="#4f4c4c" w={4} />
    <Road p="142,112 164,144 180,176" c="#e0c693" w={2} />
    <text x="118" y="20" fontSize="17" fill="#2f425a" fontFamily="Open Sans, sans-serif">Google</text>
    <circle cx="169" cy="138" r="2" fill="#dfe8ea" />
    <Road p="147,0 156,28 164,50 172,80 182,106 192,126 203,140" c="#cfd4d8" w={1.6} dash="5 4.5" />
  </Tile>
);

const Cape = () => (
  <Tile w={115} h={178}>
    <Tex id="e4" freq="0.13 0.13" seed={141} gain={1.2} colors={["#1d3a26", "#324930", "#43563e", "#546049", "#7b7a66"]} />
    <Tex id="e4s" freq="0.03 0.01" seed={2} oct={2} gain={1.2} colors={["#4b5f9a", "#5266a2", "#596ca8"]} />
    <Blur id="e4b" s={5} />
    <Blur id="e4c" s={1.2} />
    <rect width="115" height="178" filter="url(#e4s)" />
    <ellipse cx="98" cy="28" rx="7" ry="26" fill="#43558f" filter="url(#e4b)" />
    <path d="M80 164L92 172 104 170 115 166V178H90Z" fill="#222f63" filter="url(#e4c)" />
    <path d="M0 0H61V21L53 34 57 52 70 84 91 112 90 121 66 118Q46 128 38 146T37 178H0Z" fill="#1a3b50" filter="url(#e4c)" />
    <path d="M0 0H60L59 20 51 34 55 52 68 84 86 112 84 117 66 117Q44 126 36 146T34 178H0Z" filter="url(#e4)" />
    <g filter="url(#e4b)">
      <path d="M36 8L54 4 56 14 40 26Z" fill="#7d7a72" opacity=".7" />
      <path d="M0 30H18V56H0ZM0 0H24V20H0ZM0 140H14V170H0Z" fill="#16351f" opacity=".8" />
      <path d="M50 98L66 84 80 108 66 116Z" fill="#777763" opacity=".6" />
    </g>
    <path d="M12 63L28 65 40 74 36 76 20 69Z" fill="#285550" />
    <path d="M58 76L70 84 68 92 60 86Z" fill="#8e8b7e" opacity=".8" />
    <Road p="0,96 20,92 36,86 50,80 56,88 66,98 82,112" c="#b9c4b2" w={1.4} dash="4 3.5" />
    <Road p="52,0 42,4 30,15 25,26 18,40 2,60 0,67" c={AMBER} casing={AMBER_EDGE} w={1.5} />
    <Road p="0,22 14,23 33,28 48,23 57,12" c={AMBER} casing={AMBER_EDGE} w={1.5} />
    <Road p="33,28 32,36 43,48" c={AMBER} casing={AMBER_EDGE} w={1.3} />
    <Road p="0,74 16,77 29,88 30,101" c={AMBER} casing={AMBER_EDGE} w={1.5} />
    <Road p="0,122 15,119 24,106 32,101 45,96 55,84" c={AMBER} casing={AMBER_EDGE} w={1.5} />
    <Road p="24,106 30,108" c={AMBER} w={1.3} />
    <Road p="0,132 8,137 20,137 24,133 30,131 36,125 44,122" c={AMBER} casing={AMBER_EDGE} w={1.5} />
    <Road p="20,137 20,148 14,156 13,166 8,169 0,170" c={AMBER} casing={AMBER_EDGE} w={1.5} />
    <Road p="25,141 36,147 30,165" c={AMBER} casing={AMBER_EDGE} w={1.3} />
  </Tile>
);

/* ---------- row six ---------- */

const Channel = () => (
  <Tile w={130} h={86}>
    <Blur id="f1b" s={5} />
    <Blur id="f1c" s={2} />
    <rect width="130" height="86" fill="#2c345a" />
    <g filter="url(#f1b)">
      <path d="M-10 -10H96L70 6 40 6 10 14 -10 14Z" fill="#0f3850" />
      <path d="M0 22L40 8 68 16 52 50 24 46 -6 36Z" fill="#50608f" />
      <path d="M-10 46H20L44 52 44 96H-10Z" fill="#212846" />
      <path d="M50 60L66 20 90 4 84 30 60 86H46Z" fill="#585f88" />
      <path d="M74 24L104 -4H124V24L100 44 88 60 84 96H64L68 56Z" fill="#181a32" />
      <path d="M10 70L40 60 40 90 14 90Z" fill="#333d66" />
    </g>
    <g filter="url(#f1c)">
      <path d="M124 0L136 -4V92H90L88 64 98 46 118 32Z" fill="#5872b0" />
      <path d="M94 20L104 32M100 14L112 24" stroke="#4c527f" strokeWidth="2" />
      <path d="M84 6L98 2" stroke="#8086ad" strokeWidth="3" />
      <path d="M90 78L110 66 124 84" stroke="#6a86c8" strokeWidth="4" fill="none" />
    </g>
    <Road p="84,0 46,40 7,85" c="#7f9ad2" w={1.3} dash="6 4" />
    <Road p="107,0 62,45 25,85" c="#7f9ad2" w={1.3} dash="6 4" />
    <Road p="130,16 118,54 108,86" c="#7f9ad2" w={1.1} dash="6 3" />
  </Tile>
);

/* ---------- page ---------- */

const word = "-mt-1 w-full pr-px text-center text-[32px] leading-8 text-[#9370ff]";
const Word = ({ children }: { children: React.ReactNode }) => <p className={word}>{children}</p>;

const ROWS = ["h-[250px]", "h-[438px]", "h-[252px]", "h-[284px]", "h-[250px]", "h-[250px]"];

type Column = { size: string; pad?: string; cells?: Record<number, React.ReactNode> };

const COLUMNS: Column[] = [
  { size: "w-[162px]" },
  { size: "w-[146px]", pad: "pl-[14px]", cells: { 0: <TokyoForest />, 1: <Strait />, 3: <DeepSea /> } },
  { size: "w-[145px]" },
  { size: "w-[154px]", pad: "pl-[15px]", cells: { 2: <CoastCurve />, 4: <Seamounts /> } },
  { size: "w-[171px]" },
  { size: "w-[166px]" },
  {
    size: "w-[164px]",
    pad: "pl-[16px]",
    cells: { 1: <RiverBend />, 2: <BridgeLine />, 3: <Woodland />, 5: <Channel /> },
  },
  { size: "w-[145px]", pad: "pl-[14px]", cells: { 0: <RoadWeb /> } },
  { size: "w-[146px]", pad: "pl-[15px]", cells: { 4: <RedHarbour /> } },
  { size: "w-[146px]" },
  { size: "w-[145px]", pad: "pl-[14px]", cells: { 2: <HarbourIsland />, 3: <RailMap /> } },
  { size: "w-[256px]", pad: "pl-[25px]", cells: { 1: <MountainRoad />, 4: <RiverTown /> } },
  { size: "w-[145px]", pad: "pl-[14px]", cells: { 0: <Peninsula />, 1: <HillRoads />, 3: <Lake /> } },
  { size: "w-[146px]", pad: "pl-[15px]", cells: { 2: <ShoreStrip /> } },
  { size: "w-[145px]", pad: "pl-[14px]", cells: { 4: <Cape /> } },
  { size: "w-[146px]", pad: "pl-[15px]", cells: { 3: <StreetGrid /> } },
  { size: "w-[160px]", pad: "pl-[16px]", cells: { 1: <TokyoRed /> } },
];

const HEADINGS: Record<number, React.ReactNode> = {
  3: <Word>the</Word>,
  4: <Word>travelling</Word>,
  5: <Word>camera</Word>,
  6: <Word>project</Word>,
  16: (
    <Word>
      {"//\u00a0"}
      <br />
      scroll
      <br />
      down
    </Word>
  ),
};

const button =
  "flex h-[46px] items-center justify-center rounded-lg border border-[#c2c2c2] border-b-2 border-b-[#a6a6a6] bg-linear-to-b from-[#fdfdfd] to-[#f2f2f2]";

function Toolbar() {
  return (
    <header className="flex h-[76px] w-full items-start border-b-2 border-[#a2a2a2] bg-linear-to-b from-[#e8e8e8] to-[#cdcdcd] pl-[15px] pt-[15px] shadow-[inset_0_2px_0_#f4f4f4]">
      <div className="flex gap-px">
        <button className={`${button} w-[52px]`}>
          <svg width="14" height="24" viewBox="0 0 14 24" fill="none" stroke="#4d4d4d" strokeWidth="2.600">
            <path d="M12.500 1L2 12 12.500 23" />
          </svg>
        </button>
        <button className={`${button} w-[51px]`}>
          <svg width="14" height="24" viewBox="0 0 14 24" fill="none" stroke="#ababab" strokeWidth="2.600">
            <path d="M1.500 1L12 12 1.500 23" />
          </svg>
        </button>
      </div>
      <button className={`${button} ml-[18px] w-[76px]`}>
        <svg className="mt-px" width="30" height="24" viewBox="0 0 30 24" fill="none" stroke="#555" strokeWidth="2">
          <rect x="1" y="1" width="28" height="22" rx="1.500" />
          <path d="M11 1V23" />
          <path d="M4 5.500H8M4 9.500H8M4 13.500H8" stroke="#8a8a8a" />
        </svg>
      </button>
      <div className={`${button} relative ml-[643px] w-[1168px]`}>
        <svg className="mr-[9px] mt-0.5" width="16" height="21" viewBox="0 0 16 21">
          <path d="M3.500 10V5.500a4.500 4.500 0 019 0V10" fill="none" stroke="#9d9d9d" strokeWidth="2" />
          <rect y="8.500" width="16" height="12.500" rx="1.500" fill="#9d9d9d" />
        </svg>
        <span className="mt-[3px] font-[Inter,sans-serif] text-[25px] leading-none tracking-[-0.52px] text-[#424242]">
          syntheticvelvet-threeten.com
        </span>
        <svg className="absolute right-3 top-[8px]" width="24" height="28" viewBox="0 0 24 28" fill="none">
          <path d="M13 5.500A10 10 0 1 0 22 15.500" stroke="#6c6c6c" strokeWidth="2" />
          <path d="M11.500 0L18.500 5.800 11.500 11.500Z" fill="#6c6c6c" />
        </svg>
      </div>
      <button className={`${button} ml-[625px] w-[76px]`}>
        <svg className="-mt-0.5" width="24" height="32" viewBox="0 0 24 32" fill="none" stroke="#555" strokeWidth="2">
          <path d="M8.500 12H1.500V30H22.500V12H15.500" />
          <path d="M12 2V21M6.500 8L12 2 17.500 8" />
        </svg>
      </button>
      <button className={`${button} ml-[14px] w-[76px]`}>
        <svg className="mt-px" width="24" height="24" viewBox="0 0 24 24" fill="none" stroke="#555" strokeWidth="2">
          <rect x="1" y="7" width="17" height="16" rx="1.500" />
          <path d="M7 4V1H23V17H20" />
        </svg>
      </button>
      <div className="ml-[14px] mt-[9px] flex h-[50px] flex-1 items-center justify-center border-l border-t-2 border-l-[#a5a5a5] border-t-[#adadad] bg-linear-to-b from-[#bdbdbd] to-[#b0b0b0]">
        <svg className="mt-0.5" width="24" height="24" viewBox="0 0 24 24" stroke="#4a4a4a" strokeWidth="2">
          <path d="M12 1V23M1 12H23" />
        </svg>
      </div>
    </header>
  );
}

export default function App() {
  return (
    <div className="flex h-[1800px] w-[2880px] flex-col overflow-hidden bg-[#d3e4ee] font-['Liberation_Sans',Arial,sans-serif]">
      <Toolbar />
      <div className="flex min-h-0 flex-1">
        <main className="relative flex w-[2848px] overflow-hidden">
          {COLUMNS.map((col, i) => (
            <section key={i} className={`${col.size} flex shrink-0 flex-col border-r-2 border-[#9370ff]`}>
              {ROWS.map((row, r) => {
                const tile = col.cells?.[r];
                return (
                  <div key={r} className={`${row} flex shrink-0 items-center ${tile ? col.pad : ""}`}>
                    {tile ?? (r === 0 ? HEADINGS[i] : null)}
                  </div>
                );
              })}
            </section>
          ))}
          <div className="pointer-events-none absolute inset-x-0 top-0 h-[100px] bg-linear-to-b from-white/85 to-white/0" />
          <a className="absolute left-8 top-[1644.600px] whitespace-nowrap text-[64px] leading-[83.400px] text-[#666] [word-spacing:3.500px]">
            MIO ARY
          </a>
          <nav className="absolute right-8 top-[1477.800px] flex flex-col items-end text-[64px] leading-[83.400px] text-[#666]">
            <a>NEXT</a>
            <a>PREVIOUS</a>
            <a>HOME</a>
          </nav>
        </main>
        <div className="w-8 bg-[linear-gradient(to_right,#b4c3cc,#cadae4_25%,#d3e4ee_50%,#cfdfe9_75%,#b0bec8)]">
          <div className="h-[116px] w-full rounded-full border border-[#b3c2cc] bg-[#d5e5ef] shadow-[inset_0_0_10px_#a9bac5]" />
        </div>
      </div>
    </div>
  );
}
